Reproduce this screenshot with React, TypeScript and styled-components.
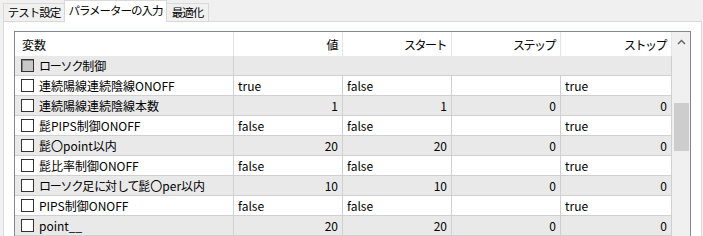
import { createGlobalStyle, styled } from "styled-components";

const GlobalStyle = createGlobalStyle`
  html, body {
    margin: 0;
    padding: 0;
    background: #f0f0f0;
  }
  body {
    font-family: "Noto Sans CJK JP", "Noto Sans", sans-serif;
    font-size: 12px;
    color: #000;
  }
`;

const Window = styled.div`
  width: 703px;
  height: 236px;
  overflow: hidden;
  background: #f0f0f0;
`;

const TabStrip = styled.div`
  display: flex;
  align-items: flex-end;
  height: 22px;
  padding-left: 3px;
  position: relative;
  z-index: 1;
`;

const Tab = styled.div<{ $active?: boolean; $w: number }>`
  width: ${(p) => p.$w}px;
  height: ${(p) => (p.$active ? "22px" : "19px")};
  box-sizing: border-box;
  display: flex;
  align-items: center;
  justify-content: center;
  border: 1px solid #d9d9d9;
  border-bottom: ${(p) => (p.$active ? "none" : "1px solid #d9d9d9")};
  margin-left: ${(p) => (p.$active ? "-1px" : "0")};
  margin-right: ${(p) => (p.$active ? "-1px" : "0")};
  padding-bottom: ${(p) => (p.$active ? "2px" : "0")};
  background: ${(p) => (p.$active ? "#ffffff" : "#f0f0f0")};
  font-size: 11.5px;
  letter-spacing: -1px;
  white-space: nowrap;
  line-height: 1;
`;

const Panel = styled.div`
  margin-left: 3px;
  margin-top: -1px;
  width: 699px;
  height: 230px;
  box-sizing: border-box;
  border: 1px solid #d9d9d9;
  background: #fff;
  padding: 9px 10px 0 10px;
`;

const ListBox = styled.div`
  display: flex;
  width: 677px;
  height: 220px;
  box-sizing: border-box;
  border: 1px solid #828790;
  border-bottom: none;
`;

const Grid = styled.div`
  width: 657px;
  display: grid;
  grid-template-columns: 219px 109px 109px 109px 111px;
  grid-auto-rows: 20px;
  grid-template-rows: 24px;
  align-content: start;
`;

const HeadCell = styled.div<{ $right?: boolean }>`
  display: flex;
  align-items: center;
  justify-content: ${(p) => (p.$right ? "flex-end" : "flex-start")};
  padding: 0 ${(p) => (p.$right ? "5px" : "0")} 0 ${(p) => (p.$right ? "0" : "7px")};
  border-right: 1px solid #e5e5e5;
  background: #fff;
  letter-spacing: ${(p) => (p.$right ? "-1.5px" : "0")};
  white-space: nowrap;
`;

const Cell = styled.div<{ $right?: boolean; $shade?: boolean; $span?: number }>`
  display: flex;
  align-items: center;
  justify-content: ${(p) => (p.$right ? "flex-end" : "flex-start")};
  padding: 0 4px;
  box-sizing: border-box;
  border-right: 1px solid #d0d0d0;
  border-bottom: 1px solid #d0d0d0;
  background: ${(p) => (p.$shade ? "#e9e9e9" : "#ffffff")};
  grid-column: ${(p) => (p.$span ? `span ${p.$span}` : "auto")};
  white-space: nowrap;
  overflow: hidden;
`;

const NameCell = styled(Cell)`
  padding-left: 6px;
  gap: 5px;
`;

const Kana = styled.span`
  letter-spacing: -1.2px;
`;

const CheckBox = styled.span<{ $gray?: boolean }>`
  display: inline-block;
  width: 13px;
  height: 13px;
  box-sizing: border-box;
  border: 1px solid #333;
  background: ${(p) => (p.$gray ? "#c8c8c8" : "#fff")};
  box-shadow: ${(p) => (p.$gray ? "inset 1px 1px 0 #8a8a8a" : "none")};
  flex: none;
`;

const ScrollBar = styled.div`
  width: 18px;
  background: #f0f0f0;
  display: flex;
  flex-direction: column;
  align-items: center;
`;

const Arrow = styled.div`
  height: 17px;
  width: 100%;
  display: flex;
  align-items: center;
  justify-content: center;
  margin-top: 1px;
`;

const Track = styled.div`
  flex: 1;
  width: 100%;
  display: flex;
  justify-content: center;
  padding-top: 53px;
`;

const Thumb = styled.div`
  width: 15px;
  height: 48px;
  background: #cdcdcd;
`;

type Row = {
  name: string;
  v?: string;
  start?: string;
  step?: string;
  stop?: string;
  num?: boolean;
};

const rows: Row[] = [
  { name: "連続陽線連続陰線ONOFF", v: "true", start: "false", step: "", stop: "true" },
  { name: "連続陽線連続陰線本数", v: "1", start: "1", step: "0", stop: "0", num: true },
  { name: "髭PIPS制御ONOFF", v: "false", start: "false", step: "", stop: "true" },
  { name: "髭〇point以内", v: "20", start: "20", step: "0", stop: "0", num: true },
  { name: "髭比率制御ONOFF", v: "false", start: "false", step: "", stop: "true" },
  { name: "ローソク足に対して髭〇per以内", v: "10", start: "10", step: "0", stop: "0", num: true },
  { name: "PIPS制御ONOFF", v: "false", start: "false", step: "", stop: "true" },
  { name: "point__", v: "20", start: "20", step: "0", stop: "0", num: true },
];

// katakana / hiragana runs are narrower in the original UI font
const renderName = (name: string) =>
  name.split(/([\u3040-\u30ff]+)/).map((part, i) =>
    /^[\u3040-\u30ff]+$/.test(part) ? <Kana key={i}>{part}</Kana> : part
  );

const App = () => {
  return (
    <Window>
      <GlobalStyle />
      <TabStrip>
        <Tab $w={62}>テスト設定</Tab>
        <Tab $active $w={103}>パラメーターの入力</Tab>
        <Tab $w={43}>最適化</Tab>
      </TabStrip>
      <Panel>
        <ListBox>
          <Grid>
            <HeadCell>変数</HeadCell>
            <HeadCell $right>値</HeadCell>
            <HeadCell $right>スタート</HeadCell>
            <HeadCell $right>ステップ</HeadCell>
            <HeadCell $right>ストップ</HeadCell>

            <NameCell $shade>
              <CheckBox $gray />
              <span>{renderName("ローソク制御")}</span>
            </NameCell>
            <Cell $shade $span={4} />

            {rows.map((r, i) => {
              const shade = i % 2 === 1;
              return [
                <NameCell key={`n${i}`} $shade={shade}>
                  <CheckBox />
                  <span>{renderName(r.name)}</span>
                </NameCell>,
                <Cell key={`v${i}`} $shade={shade} $right={r.num}>{r.v}</Cell>,
                <Cell key={`s${i}`} $shade={shade} $right={r.num}>{r.start}</Cell>,
                <Cell key={`p${i}`} $shade={shade} $right={r.num}>{r.step}</Cell>,
                <Cell key={`t${i}`} $shade={shade} $right={r.num}>{r.stop}</Cell>,
              ];
            })}
          </Grid>
          <ScrollBar>
            <Arrow>
              <svg width="9" height="6" viewBox="0 0 9 6">
                <path d="M1 5 L4.5 1.5 L8 5" fill="none" stroke="#606060" strokeWidth="1.4" />
              </svg>
            </Arrow>
            <Track>
              <Thumb />
            </Track>
          </ScrollBar>
        </ListBox>
      </Panel>
    </Window>
  );
};

export default App;
